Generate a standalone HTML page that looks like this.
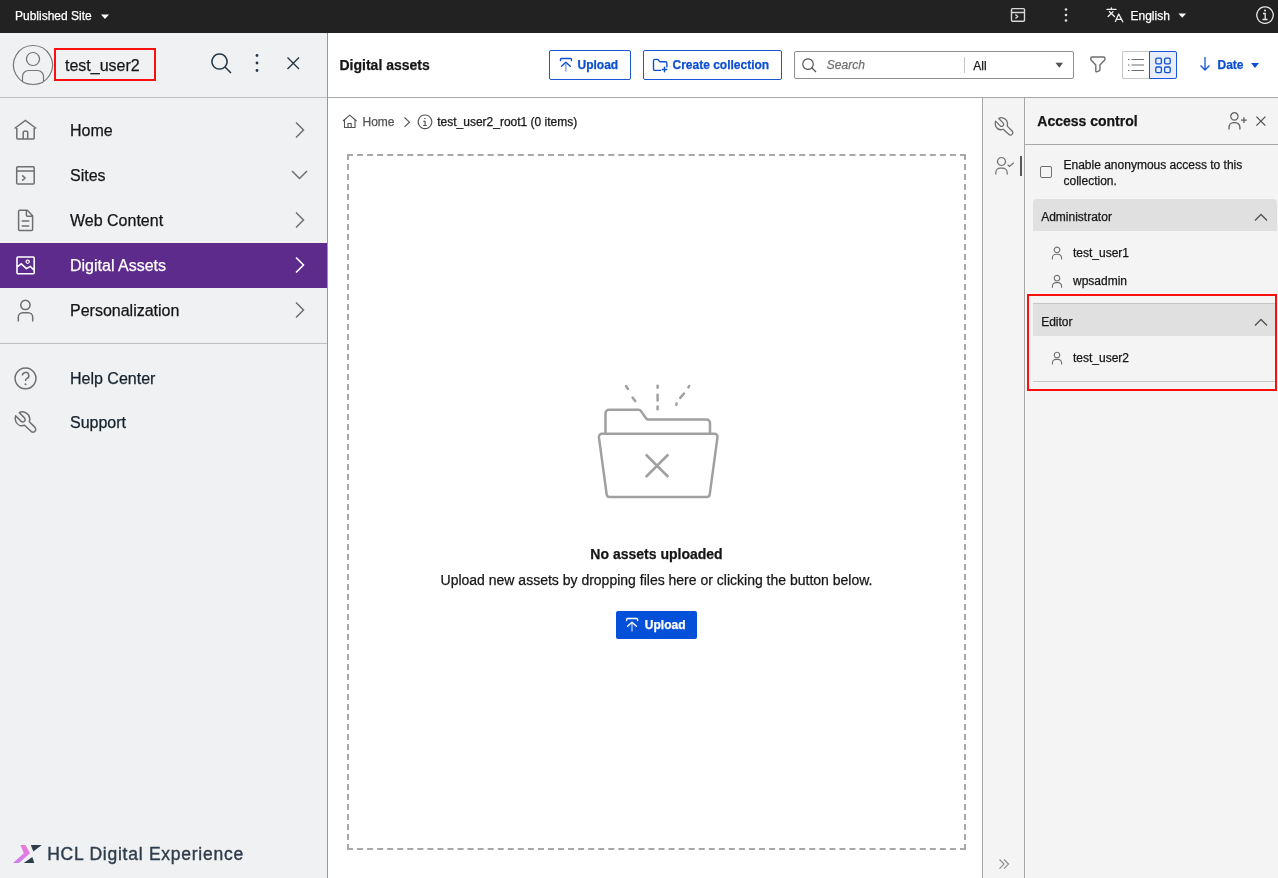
<!DOCTYPE html>
<html><head><meta charset="utf-8">
<style>
*{box-sizing:border-box;margin:0;padding:0}
html,body{width:1278px;height:878px;overflow:hidden;background:#fff;font-family:"Liberation Sans",sans-serif;color:#161616}
.b{position:absolute}
.t{position:absolute;white-space:nowrap;-webkit-text-stroke:0.25px currentColor}
#wrap{position:absolute;left:0;top:0;width:1278px;height:878px;will-change:transform}
svg{position:absolute;left:0;top:0;overflow:visible}
</style></head><body><div id="wrap">
<div class="b" style="left:0;top:0;width:1278px;height:33px;background:#222"></div>
<div class="b" style="left:0;top:33px;width:327px;height:845px;background:#f0f1f3"></div>
<div class="b" style="left:327px;top:33px;width:1px;height:845px;background:#8e9aa3"></div>
<div class="b" style="left:0;top:97px;width:327px;height:1px;background:#c0c0c0"></div>
<div class="b" style="left:328px;top:97px;width:950px;height:1px;background:#a8a8a8"></div>
<div class="b" style="left:982px;top:98px;width:296px;height:780px;background:#f4f4f4"></div>
<div class="b" style="left:982px;top:98px;width:1px;height:780px;background:#a8a8a8"></div>
<div class="b" style="left:1024px;top:98px;width:1px;height:780px;background:#a8a8a8"></div>
<div class="b" style="left:1025px;top:144px;width:253px;height:1px;background:#a8a8a8"></div>
<div class="b" style="left:0;top:243px;width:327px;height:45px;background:#5d2b8b"></div>
<div class="b" style="left:0;top:343px;width:327px;height:1px;background:#c0c0c0"></div>
<div class="t" style="left:15px;top:10.00px;font-size:12px;line-height:12px;color:#fff;font-weight:normal;font-style:normal;">Published Site</div>
<div class="t" style="left:1130.5px;top:10.00px;font-size:12px;line-height:12px;color:#fff;font-weight:normal;font-style:normal;">English</div>
<div class="t" style="left:65px;top:58.00px;font-size:16px;line-height:16px;color:#161616;font-weight:normal;font-style:normal;">test_user2</div>
<div class="b" style="left:54px;top:48px;width:102px;height:33px;border:2px solid #fc0f0f"></div>
<div class="t" style="left:70px;top:123.00px;font-size:16px;line-height:16px;color:#161616;font-weight:normal;font-style:normal;">Home</div>
<div class="t" style="left:70px;top:168.00px;font-size:16px;line-height:16px;color:#161616;font-weight:normal;font-style:normal;">Sites</div>
<div class="t" style="left:70px;top:213.00px;font-size:16px;line-height:16px;color:#161616;font-weight:normal;font-style:normal;">Web Content</div>
<div class="t" style="left:70px;top:258.00px;font-size:16px;line-height:16px;color:#fff;font-weight:normal;font-style:normal;">Digital Assets</div>
<div class="t" style="left:70px;top:303.00px;font-size:16px;line-height:16px;color:#161616;font-weight:normal;font-style:normal;">Personalization</div>
<div class="t" style="left:70px;top:371.00px;font-size:16px;line-height:16px;color:#14222d;font-weight:normal;font-style:normal;">Help Center</div>
<div class="t" style="left:70px;top:415.00px;font-size:16px;line-height:16px;color:#14222d;font-weight:normal;font-style:normal;">Support</div>
<div class="t" style="left:47.2px;top:846.00px;font-size:17.5px;line-height:17.5px;color:#2e3d4c;font-weight:normal;font-style:normal;letter-spacing:0.75px;-webkit-text-stroke:0.4px #2e3d4c">HCL Digital Experience</div>
<div class="t" style="left:339.5px;top:58.00px;font-size:14px;line-height:14px;color:#161616;font-weight:bold;font-style:normal;">Digital assets</div>
<div class="b" style="left:549px;top:50px;width:82px;height:30px;border:1px solid #1a56d6;border-radius:2px"></div>
<div class="t" style="left:577.5px;top:59.00px;font-size:12px;line-height:12px;color:#0d4fd2;font-weight:bold;font-style:normal;">Upload</div>
<div class="b" style="left:643px;top:50px;width:139px;height:30px;border:1px solid #1a56d6;border-radius:2px"></div>
<div class="t" style="left:672.5px;top:59.00px;font-size:12px;line-height:12px;color:#0d4fd2;font-weight:bold;font-style:normal;">Create collection</div>
<div class="b" style="left:794px;top:51px;width:280px;height:28px;border:1px solid #8d8d8d;border-radius:2px"></div>
<div class="b" style="left:964px;top:57px;width:1px;height:16px;background:#c6c6c6"></div>
<div class="t" style="left:826.8px;top:59.00px;font-size:12px;line-height:12px;color:#6f6f6f;font-weight:normal;font-style:italic;">Search</div>
<div class="t" style="left:973.3px;top:60.00px;font-size:12px;line-height:12px;color:#161616;font-weight:normal;font-style:normal;">All</div>
<div class="b" style="left:1122px;top:51px;width:28px;height:28px;border:1px solid #c6c6c6;border-right:none;border-radius:2px 0 0 2px;background:#fff"></div>
<div class="b" style="left:1149px;top:51px;width:28px;height:28px;border:1px solid #1a56d6;border-radius:0 2px 2px 0;background:#e8eefb"></div>
<div class="t" style="left:1217.5px;top:59.00px;font-size:12px;line-height:12px;color:#0d4fd2;font-weight:bold;font-style:normal;">Date</div>
<div class="t" style="left:362.5px;top:116.00px;font-size:12px;line-height:12px;color:#525252;font-weight:normal;font-style:normal;">Home</div>
<div class="t" style="left:437.2px;top:116.00px;font-size:12px;line-height:12px;color:#161616;font-weight:normal;font-style:normal;">test_user2_root1 (0 items)</div>
<div class="t" style="left:256.5px;width:800px;text-align:center;top:547.00px;font-size:14px;line-height:14px;color:#161616;font-weight:bold">No assets uploaded</div>
<div class="t" style="left:256.5px;width:800px;text-align:center;top:573.00px;font-size:14px;line-height:14px;color:#161616;font-weight:normal">Upload new assets by dropping files here or clicking the button below.</div>
<div class="b" style="left:616px;top:611px;width:81px;height:28px;background:#0550d8;border-radius:2px"></div>
<div class="t" style="left:644.8px;top:619.00px;font-size:12px;line-height:12px;color:#fff;font-weight:bold;font-style:normal;">Upload</div>
<div class="t" style="left:1037.3px;top:114.00px;font-size:14px;line-height:14px;color:#161616;font-weight:bold;font-style:normal;">Access control</div>
<div class="b" style="left:1040px;top:166px;width:12px;height:12px;border:1px solid #6f6f6f;border-radius:2px"></div>
<div class="t" style="left:1063.5px;top:159.00px;font-size:12px;line-height:12px;color:#161616;font-weight:normal;font-style:normal;">Enable anonymous access to this</div>
<div class="t" style="left:1063.5px;top:175.00px;font-size:12px;line-height:12px;color:#161616;font-weight:normal;font-style:normal;">collection.</div>
<div class="b" style="left:1033px;top:199px;width:244px;height:32px;background:#e0e0e0;border-radius:4px 4px 0 0"></div>
<div class="t" style="left:1041.2px;top:211.00px;font-size:12px;line-height:12px;color:#161616;font-weight:normal;font-style:normal;">Administrator</div>
<div class="t" style="left:1073px;top:247.00px;font-size:12px;line-height:12px;color:#161616;font-weight:normal;font-style:normal;">test_user1</div>
<div class="t" style="left:1073px;top:275.00px;font-size:12px;line-height:12px;color:#161616;font-weight:normal;font-style:normal;">wpsadmin</div>
<div class="b" style="left:1033px;top:303px;width:242px;height:33px;background:#e0e0e0;border-top:1px solid #c6c6c6"></div>
<div class="t" style="left:1041.2px;top:316.00px;font-size:12px;line-height:12px;color:#161616;font-weight:normal;font-style:normal;">Editor</div>
<div class="t" style="left:1073px;top:352.00px;font-size:12px;line-height:12px;color:#161616;font-weight:normal;font-style:normal;">test_user2</div>
<div class="b" style="left:1033px;top:381px;width:242px;height:1px;background:#c6c6c6"></div>
<div class="b" style="left:1027px;top:294px;width:250px;height:97px;border:2px solid #fc0f0f"></div>
<svg width="1278" height="878"><path d="M101 14.5h8l-4 4.5z" fill="#fff"/><path d="M1178.5 13.5h7.5l-3.75 4.3z" fill="#fff"/><path d="M1012.5 8.6h11a1 1 0 0 1 1 1v10.7a1 1 0 0 1 -1 1h-11a1 1 0 0 1 -1 -1v-10.7a1 1 0 0 1 1 -1z M1011.5 12.5h13 M1015.4 14.4l2.2 2.1l-2.2 2.1" fill="none" stroke="#d8d8d8" stroke-width="1.4" /><circle cx="1066" cy="9.5" r="1.3" fill="#e0e0e0"/><circle cx="1066" cy="15" r="1.3" fill="#e0e0e0"/><circle cx="1066" cy="20.5" r="1.3" fill="#e0e0e0"/><path d="M1107 9.4h9 M1111.4 7.8v1.6 M1109.3 11.5l5.2 5 M1113 11.8l-4.9 4.7 M1115.4 21.5l3.3 -7.5l4.1 7.8 M1116.4 19.4h5" fill="none" stroke="#f0f0f0" stroke-width="1.3" stroke-linecap="round" stroke-linejoin="round"/><path d="M1265 6.9a8.2 8.2 0 1 0 0.01 0z" fill="none" stroke="#e8e8e8" stroke-width="1.3" /><circle cx="1265" cy="10.5" r="1" fill="#e8e8e8"/><path d="M1263 13.5h2.2v6 M1262.5 19.5h5" fill="none" stroke="#e8e8e8" stroke-width="1.3" /><path d="M33 45.5a19.5 19.5 0 1 0 0.01 0z" fill="none" stroke="#757575" stroke-width="1.2" /><path d="M33 52.5a6.5 6.5 0 1 0 0.01 0z" fill="none" stroke="#757575" stroke-width="1.2" /><path d="M22.5 81 v-4.5a6 6 0 0 1 6 -6h9a6 6 0 0 1 6 6v4.5" fill="none" stroke="#757575" stroke-width="1.2" /><path d="M219.5 54a7.5 7.5 0 1 0 0.01 0z M225 67l6 6" fill="none" stroke="#253746" stroke-width="1.5" /><circle cx="257" cy="55.5" r="1.4" fill="#253746"/><circle cx="257" cy="63" r="1.4" fill="#253746"/><circle cx="257" cy="70.5" r="1.4" fill="#253746"/><path d="M287.5 57.5l11.5 11.5 M299 57.5l-11.5 11.5" fill="none" stroke="#253746" stroke-width="1.4" /><path d="M14.5 128.5l10.9 -8l10.9 8 M16.8 126.8v11.3a1 1 0 0 0 1 1h15.4a1 1 0 0 0 1 -1v-11.3 M23.2 139v-6.8a1 1 0 0 1 1 -1h2.5a1 1 0 0 1 1 1v6.8" fill="none" stroke="#6f6f6f" stroke-width="1.5" /><path d="M17.7 166.8h15.5a1 1 0 0 1 1 1v15.3a1 1 0 0 1 -1 1h-15.5a1 1 0 0 1 -1 -1v-15.3a1 1 0 0 1 1 -1z M16.7 171.1h17.5 M22.2 175.4l2.8 2.6l-2.8 2.6" fill="none" stroke="#6f6f6f" stroke-width="1.5" /><path d="M27.3 210.2h-7.7a1 1 0 0 0 -1 1v18.2a1 1 0 0 0 1 1h12a1 1 0 0 0 1 -1v-13.7z M26.4 210.4v4.8a1 1 0 0 0 1 1h5.2 M21.7 221.1h7.6 M21.7 225.9h7.6" fill="none" stroke="#6f6f6f" stroke-width="1.5" stroke-linejoin="round"/><path d="M18 257h15.2a1 1 0 0 1 1 1v14.8a1 1 0 0 1 -1 1h-15.2a1 1 0 0 1 -1 -1v-14.8a1 1 0 0 1 1 -1z M17.2 267l4 -3.2l5.2 4.8l3.9 -2.2l3.9 3.9" fill="none" stroke="#fff" stroke-width="1.6" /><path d="M27.7 260.1a1.6 1.6 0 1 0 0.01 0z" fill="none" stroke="#fff" stroke-width="1.2" /><path d="M25.4 300.2a4.7 4.7 0 1 0 0.01 0z M18.3 321.5v-4.2a4.5 4.5 0 0 1 4.5 -4.5h5.4a4.5 4.5 0 0 1 4.5 4.5v4.2" fill="none" stroke="#6f6f6f" stroke-width="1.5" /><path d="M25.5 368a10.4 10.4 0 1 0 0.01 0z M22.4 375.6a3.2 3.2 0 1 1 4.2 3c-0.7 0.3 -1 0.8 -1 1.6v0.9" fill="none" stroke="#6f6f6f" stroke-width="1.5" /><circle cx="25.5" cy="384.2" r="1" fill="#6f6f6f"/><g transform="translate(15 411)"><path d="M4.3 1.7C7 0 11 1 13.5 4C15 6.5 15 9 14.3 10.7L20 16.4A2.3 2.3 0 0 1 16 20.2L9.6 14.3C6 15.5 2.5 14 1 11C0 9 0 7 0.6 4.8L6.2 10.4A2.4 2.4 0 0 0 9.2 6.6Z" fill="none" stroke="#6f6f6f" stroke-width="1.5" stroke-linejoin="round"/></g><path d="M296 122.5l7.5 7.5l-7.5 7.5" fill="none" stroke="#6f6f6f" stroke-width="1.5" /><path d="M296 212.5l7.5 7.5l-7.5 7.5" fill="none" stroke="#6f6f6f" stroke-width="1.5" /><path d="M296 302.5l7.5 7.5l-7.5 7.5" fill="none" stroke="#6f6f6f" stroke-width="1.5" /><path d="M292 171l7.5 7.5l7.5 -7.5" fill="none" stroke="#6f6f6f" stroke-width="1.5" /><path d="M296 257.5l7.5 7.5l-7.5 7.5" fill="none" stroke="#fff" stroke-width="1.6" /><defs><linearGradient id="lg" x1="0" y1="1" x2="1" y2="0"><stop offset="0" stop-color="#c77ef0"/><stop offset="1" stop-color="#f07ad8"/></linearGradient></defs><path d="M20.5 845h5l4.5 8.3l-11 9.7h-6l10.8 -9.7z" fill="url(#lg)"/><path d="M30.8 845h11l-8.5 6.5z" fill="#2e3d4c"/><path d="M23.8 863h10.5l-2 -6z" fill="#2e3d4c"/><path d="M560.5 60.5v-1a1 1 0 0 1 1 -1h9a1 1 0 0 1 1 1v1 M561.5 66.2l4.4 -4l4.4 4" fill="none" stroke="#0d4fd2" stroke-width="1.4" stroke-linecap="round" stroke-linejoin="round"/><path d="M565.9 63v8.5" fill="none" stroke="#7fa3e6" stroke-width="1.4" /><path d="M660.5 70.4h-5.5a1.5 1.5 0 0 1 -1.5 -1.5v-8a1.5 1.5 0 0 1 1.5 -1.5h2.5a1 1 0 0 1 .8 .4l1.2 1.6a1 1 0 0 0 .8 .4h5.1a1.5 1.5 0 0 1 1.5 1.5v3.6 M662.2 69.45h4.6 M664.5 67.2v4.6" fill="none" stroke="#0d4fd2" stroke-width="1.4" stroke-linecap="round"/><path d="M808 58.8a5.3 5.3 0 1 0 0.01 0z M812 68l4 4" fill="none" stroke="#525252" stroke-width="1.2" /><path d="M1055.5 62.7h7.5l-3.75 5z" fill="#525252"/><path d="M1092.3 57h11.6a1 1 0 0 1 1 1v1.8l-5 5.2v5a1 1 0 0 1 -0.7 0.95l-2.6 0.85a0.6 0.6 0 0 1 -0.8 -0.6v-6.2l-5 -5.2v-1.8a1 1 0 0 1 1 -1z" fill="none" stroke="#6f6f6f" stroke-width="1.4" stroke-linejoin="round"/><path d="M1128 59.5h1.5 M1131.5 59.5h12.5" fill="none" stroke="#6f6f6f" stroke-width="1.2" /><path d="M1128 65h1.5 M1131.5 65h12.5" fill="none" stroke="#6f6f6f" stroke-width="1.2" /><path d="M1128 70.5h1.5 M1131.5 70.5h12.5" fill="none" stroke="#6f6f6f" stroke-width="1.2" /><rect x="1155.8" y="58.2" width="5.6" height="5.6" rx="1.3" fill="none" stroke="#0d4fd2" stroke-width="1.3"/><rect x="1164.6" y="58.2" width="5.6" height="5.6" rx="1.3" fill="none" stroke="#0d4fd2" stroke-width="1.3"/><rect x="1155.8" y="67" width="5.6" height="5.6" rx="1.3" fill="none" stroke="#0d4fd2" stroke-width="1.3"/><rect x="1164.6" y="67" width="5.6" height="5.6" rx="1.3" fill="none" stroke="#0d4fd2" stroke-width="1.3"/><path d="M1205 57v13 M1200.5 65.5l4.5 4.5l4.5 -4.5" fill="none" stroke="#1a56d6" stroke-width="1.3" /><path d="M1251 63h8l-4 5z" fill="#0d4fd2"/><path d="M343 121l6.8 -5.8l6.8 5.8 M344.5 120v7.5h10.5v-7.5 M348 127.5v-4h3.2v4" fill="none" stroke="#525252" stroke-width="1.1" /><path d="M404.5 117.5l5 4.7l-5 4.7" fill="none" stroke="#525252" stroke-width="1.1" /><path d="M425 115a6.8 6.8 0 1 0 0.01 0z" fill="none" stroke="#525252" stroke-width="1.1" /><circle cx="425" cy="118.6" r="0.75" fill="#525252"/><path d="M423.4 121.4h1.7v4.1 M423.2 125.5h3.6" fill="none" stroke="#525252" stroke-width="1.1" /><path d="M347 155L966 155" stroke="#a8a8a8" stroke-width="2" stroke-dasharray="6 4.049" fill="none"/><path d="M347 849L966 849" stroke="#a8a8a8" stroke-width="2" stroke-dasharray="6 4.049" fill="none"/><path d="M348 154L348 850" stroke="#a8a8a8" stroke-width="2" stroke-dasharray="6 4.000" fill="none"/><path d="M965 154L965 850" stroke="#a8a8a8" stroke-width="2" stroke-dasharray="6 4.000" fill="none"/><path d="M601 433.8h113.5a3 3 0 0 1 3 3.3l-7.8 57.5a3 3 0 0 1 -3 2.5h-97a3 3 0 0 1 -3 -2.5l-7.8 -57.5a3 3 0 0 1 3 -3.3z" fill="none" stroke="#a0a0a0" stroke-width="2.5" /><path d="M605.5 433.8v-20.5a3.5 3.5 0 0 1 3.5 -3.5h29.5a3 3 0 0 1 2.5 1.3l5 7.2a3 3 0 0 0 2.5 1.3h58a3.5 3.5 0 0 1 3.5 3.5v10.7" fill="none" stroke="#a0a0a0" stroke-width="2.5" /><path d="M645.8 454.5l22.5 22.5 M668.3 454.5l-22.5 22.5" fill="none" stroke="#a0a0a0" stroke-width="2.5" /><path d="M657.6 385.8L657.6 387.8" fill="none" stroke="#a0a0a0" stroke-width="2.5" stroke-linecap="round"/><path d="M657.6 394.7L657.6 400.4" fill="none" stroke="#a0a0a0" stroke-width="2.5" stroke-linecap="round"/><path d="M657.6 406.5L657.6 409.3" fill="none" stroke="#a0a0a0" stroke-width="2.5" stroke-linecap="round"/><path d="M626 386L628 389" fill="none" stroke="#a0a0a0" stroke-width="2.5" stroke-linecap="round"/><path d="M632.6 397.5L635.2 401.1" fill="none" stroke="#a0a0a0" stroke-width="2.5" stroke-linecap="round"/><path d="M689.2 386L688.4 387.4" fill="none" stroke="#a0a0a0" stroke-width="2.5" stroke-linecap="round"/><path d="M684 393.5L680.2 397.8" fill="none" stroke="#a0a0a0" stroke-width="2.5" stroke-linecap="round"/><path d="M676.6 403.4L676.3 404.8" fill="none" stroke="#a0a0a0" stroke-width="2.5" stroke-linecap="round"/><path d="M626.6 620.5v-1a1 1 0 0 1 1 -1h9a1 1 0 0 1 1 1v1 M627.6 626.2l4.4 -4l4.4 4" fill="none" stroke="#ffffff" stroke-width="1.4" stroke-linecap="round" stroke-linejoin="round"/><path d="M632.0 623v8.5" fill="none" stroke="#a8c0f0" stroke-width="1.4" /><path d="M1234.4 112.7a3.7 3.7 0 1 0 0.01 0z M1229 129.6v-2.4a4.5 4.5 0 0 1 4.5 -4.5h1.9a4.5 4.5 0 0 1 4.5 4.5v2.4 M1241 120.2h5.8 M1243.9 117.2v5.8" fill="none" stroke="#5e5e5e" stroke-width="1.3" /><path d="M1256.4 116.6l9 9 M1265.4 116.6l-9 9" fill="none" stroke="#525252" stroke-width="1.3" /><g transform="translate(995 117) scale(0.857)"><path d="M4.3 1.7C7 0 11 1 13.5 4C15 6.5 15 9 14.3 10.7L20 16.4A2.3 2.3 0 0 1 16 20.2L9.6 14.3C6 15.5 2.5 14 1 11C0 9 0 7 0.6 4.8L6.2 10.4A2.4 2.4 0 0 0 9.2 6.6Z" fill="none" stroke="#6f6f6f" stroke-width="1.5" stroke-linejoin="round"/></g><path d="M1001.5 157.5a4 4 0 1 0 0.01 0z M995.8 174.5v-1.8a4.5 4.5 0 0 1 4.5 -4.5h2.4a4.5 4.5 0 0 1 4.5 4.5v1.8 M1007.6 164.6l1.8 1.8l4.4 -3.6" fill="none" stroke="#6f6f6f" stroke-width="1.2" /><rect x="1020" y="156" width="2" height="20" fill="#595959"/><path d="M1255 220.5l6 -6l6 6" fill="none" stroke="#525252" stroke-width="1.3" /><path d="M1255 325.5l6 -6l6 6" fill="none" stroke="#525252" stroke-width="1.3" /><path d="M1057 247.1a2.8 2.8 0 1 0 0.01 0z M1052.4 259.5v-1.6a3.6 3.6 0 0 1 3.6 -3.6h2a3.6 3.6 0 0 1 3.6 3.6v1.6" fill="none" stroke="#6f6f6f" stroke-width="1.1" /><path d="M1057 275.40000000000003a2.8 2.8 0 1 0 0.01 0z M1052.4 287.8v-1.6a3.6 3.6 0 0 1 3.6 -3.6h2a3.6 3.6 0 0 1 3.6 3.6v1.6" fill="none" stroke="#6f6f6f" stroke-width="1.1" /><path d="M1057 352.20000000000005a2.8 2.8 0 1 0 0.01 0z M1052.4 364.6v-1.6a3.6 3.6 0 0 1 3.6 -3.6h2a3.6 3.6 0 0 1 3.6 3.6v1.6" fill="none" stroke="#6f6f6f" stroke-width="1.1" /><path d="M999.5 859.5l4.5 4.6l-4.5 4.6 M1004 859.5l4.5 4.6l-4.5 4.6" fill="none" stroke="#8d8d8d" stroke-width="1.2" /></svg>
</div></body></html>
